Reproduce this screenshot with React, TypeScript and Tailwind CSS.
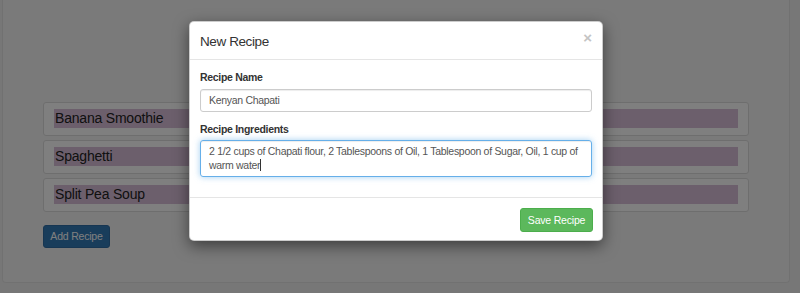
import React from "react";

const recipes = ["Banana Smoothie", "Spaghetti", "Split Pea Soup"];

export default function App() {
  return (
    <div
      className="relative w-[800px] h-[293px] overflow-hidden bg-[#eeeeee]"
      style={{ fontFamily: '"Liberation Sans", Arial, sans-serif' }}
    >
      {/* page */}
      <div className="ml-[2px] w-[788px] h-[283px] bg-[#f5f5f5] border border-t-0 border-[#e3e3e3] rounded-b-[4px] pl-[40px] pr-[40px] pt-[102px]">
        <div className="flex flex-col gap-[4px]">
          {recipes.map((r) => (
            <div
              key={r}
              className="h-[34px] bg-white border border-[#dddddd] rounded-[3px] px-[10px] pt-[6px]"
            >
              <div className="h-[19px] bg-[#d8bfd8] text-[#222] text-[14px] leading-[19px] tracking-[-0.2px] pl-[1px]">
                {r}
              </div>
            </div>
          ))}
        </div>
        <button className="mt-[13px] h-[23px] w-[67px] rounded-[3px] bg-[#337ab7] border border-[#2e6da4] text-white text-[10.5px] tracking-[-0.2px] leading-[21px]">
          Add Recipe
        </button>
      </div>

      {/* backdrop */}
      <div className="absolute inset-0 bg-black/50" />

      {/* modal */}
      <div className="absolute left-[189px] top-[21px] w-[414px] h-[220px] bg-white rounded-[5px] border border-black/20 shadow-[0_5px_15px_rgba(0,0,0,0.5)] flex flex-col">
        <div className="h-[38px] border-b border-[#e5e5e5] flex items-center justify-between pl-[10px] pr-[10px]">
          <span className="text-[13.5px] tracking-[-0.4px] text-[#333] leading-[16px] mt-[2px]">New Recipe</span>
          <span className="text-[15px] font-bold text-[#c4c4c4] leading-[15px] -mt-[6px]">×</span>
        </div>
        <div className="px-[10px] pt-[10px] h-[137px]">
          <div className="text-[10.5px] font-bold text-[#333] leading-[14px] tracking-[-0.3px] mb-[5px]">Recipe Name</div>
          <div className="h-[23px] border border-[#cccccc] rounded-[3px] px-[8px] text-[10.5px] tracking-[-0.3px] text-[#555] leading-[21px] shadow-[inset_0_1px_1px_rgba(0,0,0,0.075)]">
            Kenyan Chapati
          </div>
          <div className="mt-[10px] text-[10.5px] font-bold text-[#333] leading-[14px] tracking-[-0.3px] mb-[4px]">Recipe Ingredients</div>
          <div className="h-[37px] border border-[#66afe9] rounded-[3px] px-[8px] pt-[3px] text-[10.5px] tracking-[-0.3px] text-[#555] leading-[14px] shadow-[inset_0_1px_1px_rgba(0,0,0,0.075),0_0_6px_rgba(102,175,233,0.6)]">
            2 1/2 cups of Chapati flour, 2 Tablespoons of Oil, 1 Tablespoon of Sugar, Oil, 1 cup of warm water
            <span className="inline-block w-px h-[12px] bg-[#333] align-[-2px]" />
          </div>
        </div>
        <div className="flex-1 border-t border-[#e5e5e5] flex justify-end items-start pt-[10px] pr-[9px]">
          <button className="h-[24px] w-[73px] rounded-[3px] bg-[#5cb85c] border border-[#4cae4c] text-white text-[10.5px] tracking-[-0.2px] leading-[22px]">
            Save Recipe
          </button>
        </div>
      </div>
    </div>
  );
}
